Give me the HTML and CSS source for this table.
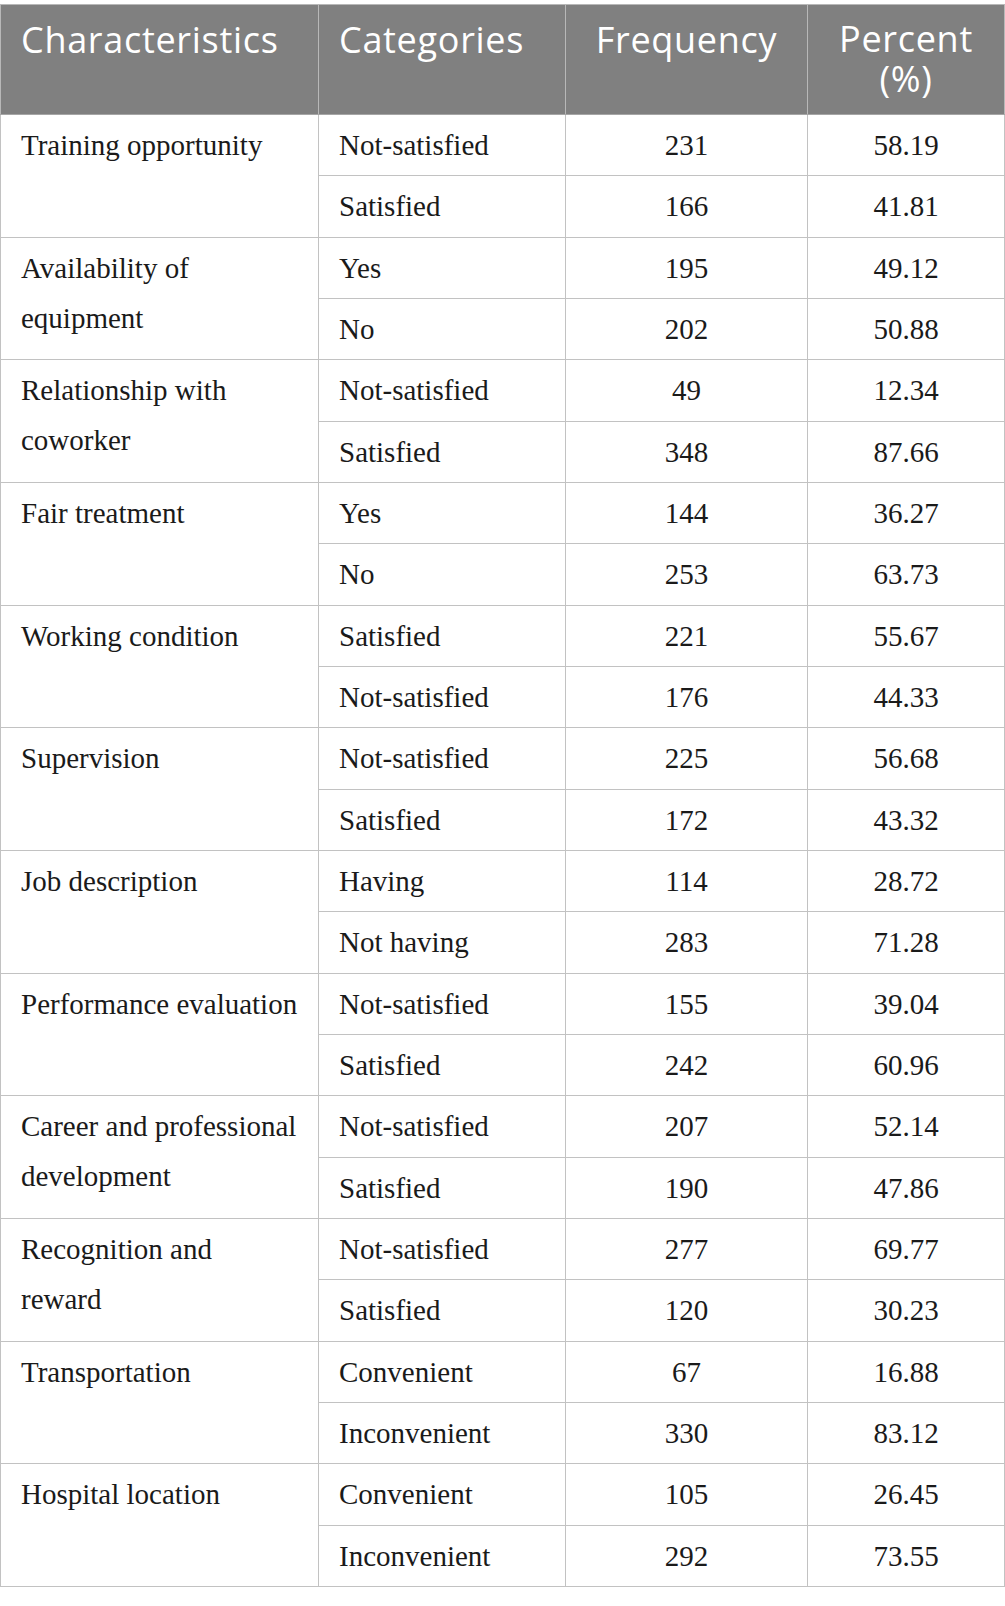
FILE: index.html
```html
<!DOCTYPE html>
<html lang="en">
<head>
<meta charset="utf-8">
<title>Job satisfaction characteristics</title>
<link rel="stylesheet" href="styles.css">
</head>
<body>
<table class="data">
  <colgroup>
    <col class="c-char">
    <col class="c-cat">
    <col class="c-freq">
    <col class="c-pct">
  </colgroup>
  <thead>
    <tr>
      <th class="left">Characteristics</th>
      <th class="left">Categories</th>
      <th>Frequency</th>
      <th><span class="hl">Percent</span><span class="hl">(%)</span></th>
    </tr>
  </thead>
  <tbody>
    <tr><td class="char" rowspan="2">Training opportunity</td><td class="cat">Not-satisfied</td><td class="num">231</td><td class="num">58.19</td></tr>
    <tr><td class="cat">Satisfied</td><td class="num">166</td><td class="num">41.81</td></tr>
    <tr><td class="char" rowspan="2">Availability of equipment</td><td class="cat">Yes</td><td class="num">195</td><td class="num">49.12</td></tr>
    <tr><td class="cat">No</td><td class="num">202</td><td class="num">50.88</td></tr>
    <tr><td class="char" rowspan="2">Relationship with coworker</td><td class="cat">Not-satisfied</td><td class="num">49</td><td class="num">12.34</td></tr>
    <tr><td class="cat">Satisfied</td><td class="num">348</td><td class="num">87.66</td></tr>
    <tr><td class="char" rowspan="2">Fair treatment</td><td class="cat">Yes</td><td class="num">144</td><td class="num">36.27</td></tr>
    <tr><td class="cat">No</td><td class="num">253</td><td class="num">63.73</td></tr>
    <tr><td class="char" rowspan="2">Working condition</td><td class="cat">Satisfied</td><td class="num">221</td><td class="num">55.67</td></tr>
    <tr><td class="cat">Not-satisfied</td><td class="num">176</td><td class="num">44.33</td></tr>
    <tr><td class="char" rowspan="2">Supervision</td><td class="cat">Not-satisfied</td><td class="num">225</td><td class="num">56.68</td></tr>
    <tr><td class="cat">Satisfied</td><td class="num">172</td><td class="num">43.32</td></tr>
    <tr><td class="char" rowspan="2">Job description</td><td class="cat">Having</td><td class="num">114</td><td class="num">28.72</td></tr>
    <tr><td class="cat">Not having</td><td class="num">283</td><td class="num">71.28</td></tr>
    <tr><td class="char" rowspan="2">Performance evaluation</td><td class="cat">Not-satisfied</td><td class="num">155</td><td class="num">39.04</td></tr>
    <tr><td class="cat">Satisfied</td><td class="num">242</td><td class="num">60.96</td></tr>
    <tr><td class="char" rowspan="2">Career and professional development</td><td class="cat">Not-satisfied</td><td class="num">207</td><td class="num">52.14</td></tr>
    <tr><td class="cat">Satisfied</td><td class="num">190</td><td class="num">47.86</td></tr>
    <tr><td class="char" rowspan="2">Recognition and reward</td><td class="cat">Not-satisfied</td><td class="num">277</td><td class="num">69.77</td></tr>
    <tr><td class="cat">Satisfied</td><td class="num">120</td><td class="num">30.23</td></tr>
    <tr><td class="char" rowspan="2">Transportation</td><td class="cat">Convenient</td><td class="num">67</td><td class="num">16.88</td></tr>
    <tr><td class="cat">Inconvenient</td><td class="num">330</td><td class="num">83.12</td></tr>
    <tr><td class="char" rowspan="2">Hospital location</td><td class="cat">Convenient</td><td class="num">105</td><td class="num">26.45</td></tr>
    <tr><td class="cat">Inconvenient</td><td class="num">292</td><td class="num">73.55</td></tr>
  </tbody>
</table>
</body>
</html>
```

FILE: styles.css
```css
html, body {
  margin: 0;
  padding: 0;
  background: #ffffff;
}

body {
  padding-top: 4px;
}

.data {
  border-collapse: collapse;
  width: 1004px;
  table-layout: fixed;
  font-family: "Liberation Serif", "Times New Roman", serif;
  color: #1a1a1a;
}

.c-char { width: 318px; }
.c-cat { width: 247px; }
.c-freq { width: 242px; }
.c-pct { width: 197px; }

.data th {
  background: #808080;
  color: #ffffff;
  font-family: "Open Sans", "Noto Sans", sans-serif;
  font-weight: 400;
  font-size: 36px;
  letter-spacing: 0.7px;
  line-height: 40px;
  height: 110px;
  padding: 15px 10px 0;
  vertical-align: top;
  text-align: center;
  border: 1px solid #b8b8b8;
  border-bottom-color: #a6a6a6;
  box-sizing: border-box;
}

.data th.left {
  text-align: left;
  padding-left: 20px;
}

.hl {
  display: block;
  height: 40px;
  line-height: 38px;
}

.data tbody tr {
  height: 61.33px;
}

.data td {
  border: 1px solid #c2c2c2;
  font-size: 29px;
  line-height: 50px;
  padding: 5px 20px 0;
  vertical-align: top;
}

.data td.num {
  text-align: center;
  padding-left: 10px;
  padding-right: 10px;
}
```
